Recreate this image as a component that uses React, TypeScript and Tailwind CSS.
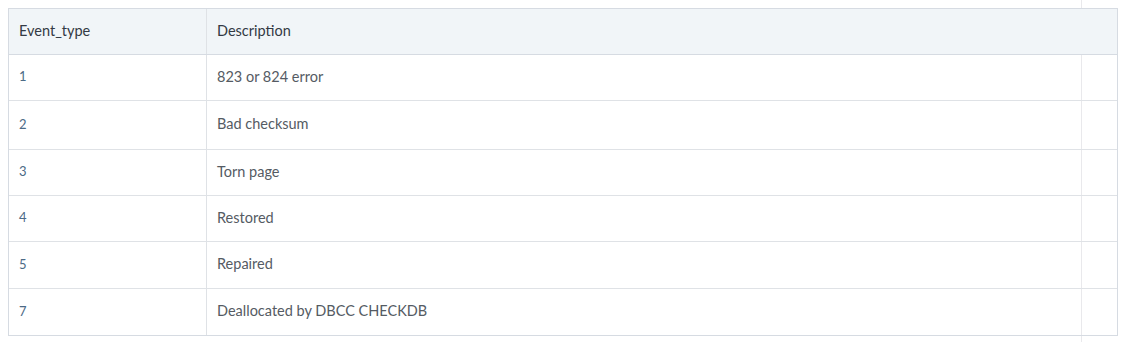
import React from "react";

const rows: [string, string, string][] = [
  ["1", "823 or 824 error", "h-[46px]"],
  ["2", "Bad checksum", "h-[49px]"],
  ["3", "Torn page", "h-[46px]"],
  ["4", "Restored", "h-[46px]"],
  ["5", "Repaired", "h-[47px]"],
  ["7", "Deallocated by DBCC CHECKDB", "h-[46px]"],
];

export default function App() {
  return (
    <div className="relative w-[1123px] h-[342px] bg-white overflow-hidden" style={{ fontFamily: "Lato, 'Noto Sans', sans-serif" }}>
      <div className="absolute left-[1081px] top-0 h-full w-px bg-[#e9e9ec]" />
      <div className="relative pt-2 pl-2">
        <div className="w-[1110px] border border-[#d6dbe2]">
          <div className="flex h-[46px] bg-[#f1f5f8] border-b border-[#d6dbe2] text-[14.5px] text-[#333a44]">
            <div className="w-[198px] border-r border-[#dfe2e6] flex items-center pl-[10px] pb-[2px]">Event_type</div>
            <div className="flex-1 flex items-center pl-[10px] pb-[2px]">Description</div>
          </div>
          {rows.map(([n, d, h], i) => (
            <div key={n} className={`flex ${h} ${i < rows.length - 1 ? "border-b border-[#dfe2e6]" : ""} text-[14.5px]`}>
              <div className="w-[198px] border-r border-[#dfe2e6] flex items-center pl-[10px] pb-[1px] text-[13px] text-[#4c6a86]">{n}</div>
              <div className="flex-1 flex items-center pl-[10px] pb-[2px] text-[#555b63]">{d}</div>
            </div>
          ))}
        </div>
      </div>
    </div>
  );
}
